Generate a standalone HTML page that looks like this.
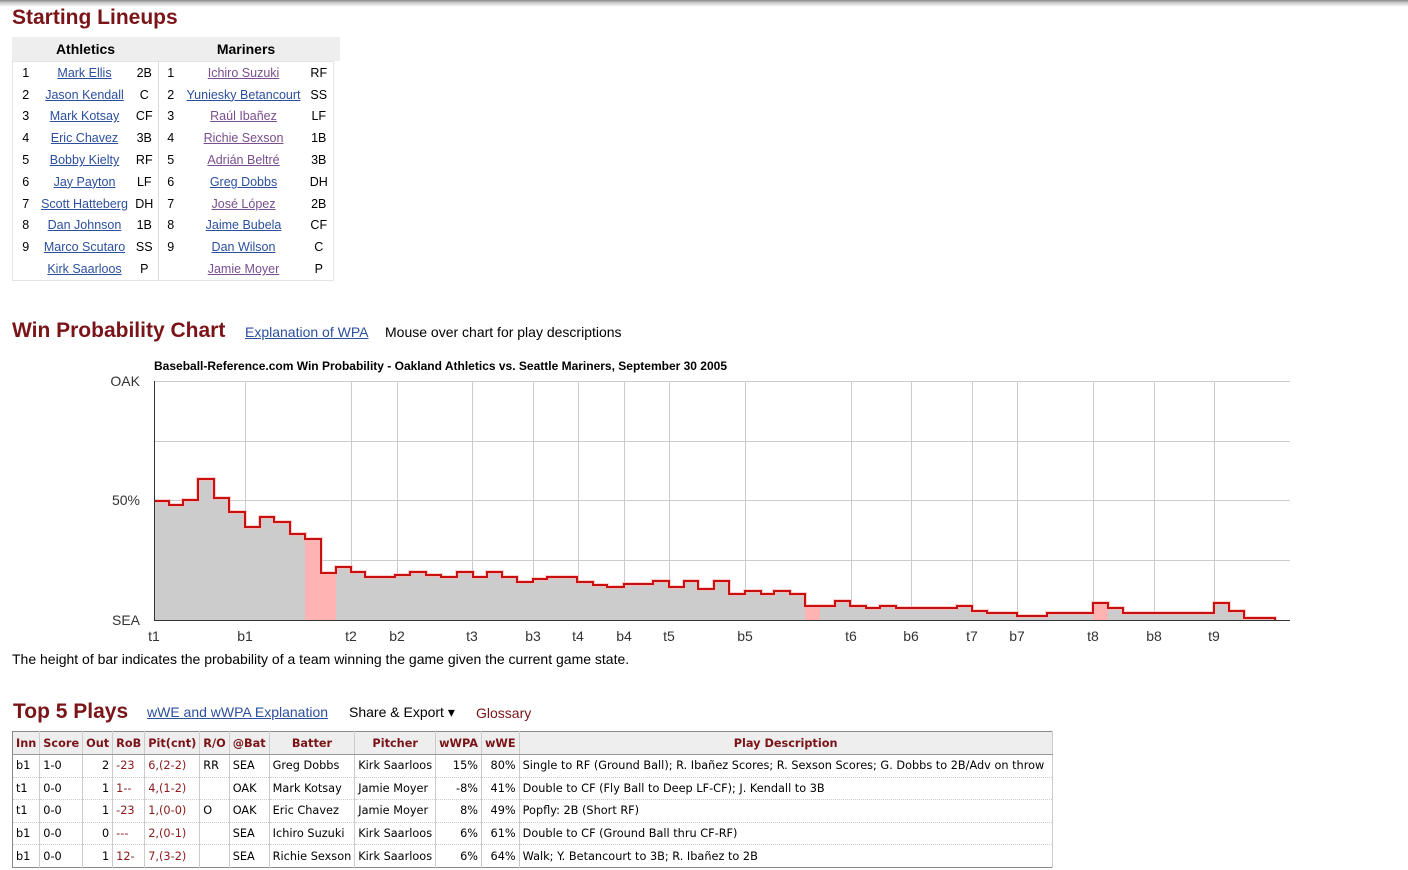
<!DOCTYPE html>
<html><head><meta charset="utf-8"><style>
body{margin:0;width:1408px;height:870px;overflow:hidden;background:#fff;font-family:"Liberation Sans",Arial,sans-serif;color:#000;position:relative}
.topbar{position:absolute;left:0;top:0;width:1408px;height:7px;background:linear-gradient(#888,#ccc 40%,#fff)}
h2{position:absolute;margin:0;color:#7a1418;font-size:21px;font-weight:bold}
a{color:#2c4f9e;text-decoration:underline}
a.v{color:#7a4e8e}
table{border-collapse:collapse;position:absolute}
#lu{left:12px;top:37px;font-size:12.5px;table-layout:fixed;width:321px}
#lu th{background:#eee;height:24px;font-size:14px;padding:0}
#lu td{height:21.8px;padding:0;text-align:center;white-space:nowrap;overflow:visible}
#lu td.sep{border-left:1px solid #ddd}
#lu tbody{border:1px solid #e4e4e4}
#tp{left:12px;top:731px;font-family:"DejaVu Sans",sans-serif;font-size:11.3px;border:1px solid #888}
#tp th{background:#eee;color:#7a1418;font-size:11.3px;height:22px;padding:0 3px;border-right:1px solid #ccc;border-bottom:1px solid #999}
#tp td{height:21.6px;padding:0 3px;border-right:1px solid #ccc;border-bottom:1px dotted #ccc;white-space:nowrap}
.r{color:#8b1a1a}
.ra{text-align:right}
</style></head><body>
<div class="topbar"></div>
<h2 style="left:12px;top:6px">Starting Lineups</h2>
<div style="position:absolute;left:12px;top:37px;width:328px;height:24px;background:#eee"></div>
<table id="lu">
<colgroup><col style="width:26px"><col style="width:92px"><col style="width:28px"><col style="width:24px"><col style="width:122px"><col style="width:29px"></colgroup>
<thead><tr><th colspan="3">Athletics</th><th colspan="3">Mariners</th></tr></thead>
<tbody>
<tr><td>1</td><td><a>Mark Ellis</a></td><td>2B</td><td class="sep">1</td><td><a class="v">Ichiro Suzuki</a></td><td>RF</td></tr>
<tr><td>2</td><td><a>Jason Kendall</a></td><td>C</td><td class="sep">2</td><td><a>Yuniesky Betancourt</a></td><td>SS</td></tr>
<tr><td>3</td><td><a>Mark Kotsay</a></td><td>CF</td><td class="sep">3</td><td><a class="v">Raúl Ibañez</a></td><td>LF</td></tr>
<tr><td>4</td><td><a>Eric Chavez</a></td><td>3B</td><td class="sep">4</td><td><a class="v">Richie Sexson</a></td><td>1B</td></tr>
<tr><td>5</td><td><a>Bobby Kielty</a></td><td>RF</td><td class="sep">5</td><td><a class="v">Adrián Beltré</a></td><td>3B</td></tr>
<tr><td>6</td><td><a>Jay Payton</a></td><td>LF</td><td class="sep">6</td><td><a>Greg Dobbs</a></td><td>DH</td></tr>
<tr><td>7</td><td><a>Scott Hatteberg</a></td><td>DH</td><td class="sep">7</td><td><a class="v">José López</a></td><td>2B</td></tr>
<tr><td>8</td><td><a>Dan Johnson</a></td><td>1B</td><td class="sep">8</td><td><a>Jaime Bubela</a></td><td>CF</td></tr>
<tr><td>9</td><td><a>Marco Scutaro</a></td><td>SS</td><td class="sep">9</td><td><a>Dan Wilson</a></td><td>C</td></tr>
<tr><td></td><td><a>Kirk Saarloos</a></td><td>P</td><td class="sep"></td><td><a class="v">Jamie Moyer</a></td><td>P</td></tr>
</tbody></table>

<h2 style="left:12px;top:319px">Win Probability Chart</h2>
<div style="position:absolute;left:245px;top:324px;font-size:14px"><a>Explanation of WPA</a></div>
<div style="position:absolute;left:385px;top:324px;font-size:14px">Mouse over chart for play descriptions</div>

<svg style="position:absolute;left:0;top:350px" width="1408" height="320" viewBox="0 350 1408 320">
<text x="154" y="370" font-family="Liberation Sans" font-weight="bold" font-size="12" textLength="573" lengthAdjust="spacingAndGlyphs">Baseball-Reference.com Win Probability - Oakland Athletics vs. Seattle Mariners, September 30 2005</text>
<g stroke="#ccc" stroke-width="1">
<line x1="154" y1="381.5" x2="1290" y2="381.5"/><line x1="154" y1="441.5" x2="1290" y2="441.5"/><line x1="154" y1="500.5" x2="1290" y2="500.5"/><line x1="154" y1="560.5" x2="1290" y2="560.5"/>
<line x1="245.5" y1="381" x2="245.5" y2="620"/><line x1="351.5" y1="381" x2="351.5" y2="620"/><line x1="397.5" y1="381" x2="397.5" y2="620"/><line x1="472.5" y1="381" x2="472.5" y2="620"/><line x1="533.5" y1="381" x2="533.5" y2="620"/><line x1="578.5" y1="381" x2="578.5" y2="620"/><line x1="624.5" y1="381" x2="624.5" y2="620"/><line x1="669.5" y1="381" x2="669.5" y2="620"/><line x1="745.5" y1="381" x2="745.5" y2="620"/><line x1="851.5" y1="381" x2="851.5" y2="620"/><line x1="911.5" y1="381" x2="911.5" y2="620"/><line x1="972.5" y1="381" x2="972.5" y2="620"/><line x1="1017.5" y1="381" x2="1017.5" y2="620"/><line x1="1093.5" y1="381" x2="1093.5" y2="620"/><line x1="1154.5" y1="381" x2="1154.5" y2="620"/><line x1="1214.5" y1="381" x2="1214.5" y2="620"/>
</g>
<path fill="#ccc" d="M154,501 H169 V505 H183 V500 H198 V479 H214 V498 H229 V512 H245 V527 H260 V517 H274 V522 H290 V534 H305 V539 H321 V573 H336 V567 H351 V572 H365 V577 H395 V575 H410 V572 H426 V575 H441 V577 H457 V572 H473 V577 H487 V572 H502 V577 H517 V582 H533 V579 H547 V577 H577 V582 H593 V585 H607 V587 H624 V584 H653 V581 H669 V587 H684 V581 H698 V589 H714 V581 H729 V594 H745 V591 H761 V594 H774 V591 H790 V594 H805 V606 H835 V601 H850 V606 H866 V608 H880 V606 H896 V608 H957 V606 H972 V611 H987 V613 H1017 V616 H1047 V613 H1093 V603 H1108 V608 H1123 V613 H1214 V603 H1229 V611 H1244 V618 H1275 V620 H1290 V620 H154 Z"/>
<g fill="#ffb3b3"><rect x="305" y="539" width="16" height="81"/><rect x="321" y="573" width="15" height="47"/><rect x="805" y="606" width="15" height="14"/><rect x="1093" y="603" width="15" height="17"/></g>
<path fill="none" stroke="#ffb0b0" stroke-width="4" opacity="0.6" d="M154,501 H169 V505 H183 V500 H198 V479 H214 V498 H229 V512 H245 V527 H260 V517 H274 V522 H290 V534 H305 V539 H321 V573 H336 V567 H351 V572 H365 V577 H395 V575 H410 V572 H426 V575 H441 V577 H457 V572 H473 V577 H487 V572 H502 V577 H517 V582 H533 V579 H547 V577 H577 V582 H593 V585 H607 V587 H624 V584 H653 V581 H669 V587 H684 V581 H698 V589 H714 V581 H729 V594 H745 V591 H761 V594 H774 V591 H790 V594 H805 V606 H835 V601 H850 V606 H866 V608 H880 V606 H896 V608 H957 V606 H972 V611 H987 V613 H1017 V616 H1047 V613 H1093 V603 H1108 V608 H1123 V613 H1214 V603 H1229 V611 H1244 V618 H1275 V620"/>
<path fill="none" stroke="#c81010" stroke-width="2" d="M154,501 H169 V505 H183 V500 H198 V479 H214 V498 H229 V512 H245 V527 H260 V517 H274 V522 H290 V534 H305 V539 H321 V573 H336 V567 H351 V572 H365 V577 H395 V575 H410 V572 H426 V575 H441 V577 H457 V572 H473 V577 H487 V572 H502 V577 H517 V582 H533 V579 H547 V577 H577 V582 H593 V585 H607 V587 H624 V584 H653 V581 H669 V587 H684 V581 H698 V589 H714 V581 H729 V594 H745 V591 H761 V594 H774 V591 H790 V594 H805 V606 H835 V601 H850 V606 H866 V608 H880 V606 H896 V608 H957 V606 H972 V611 H987 V613 H1017 V616 H1047 V613 H1093 V603 H1108 V608 H1123 V613 H1214 V603 H1229 V611 H1244 V618 H1275 V620"/>
<line x1="154.5" y1="381" x2="154.5" y2="621" stroke="#333"/>
<line x1="154" y1="620.5" x2="1290" y2="620.5" stroke="#333"/>
<g font-family="Liberation Sans" font-size="14" fill="#333" text-anchor="end">
<text x="140" y="386">OAK</text><text x="140" y="505">50%</text><text x="140" y="625">SEA</text></g>
<g font-family="Liberation Sans" font-size="14" fill="#333" text-anchor="middle">
<text x="154" y="641">t1</text><text x="245" y="641">b1</text><text x="351" y="641">t2</text><text x="397" y="641">b2</text><text x="472" y="641">t3</text><text x="533" y="641">b3</text><text x="578" y="641">t4</text><text x="624" y="641">b4</text><text x="669" y="641">t5</text><text x="745" y="641">b5</text><text x="851" y="641">t6</text><text x="911" y="641">b6</text><text x="972" y="641">t7</text><text x="1017" y="641">b7</text><text x="1093" y="641">t8</text><text x="1154" y="641">b8</text><text x="1214" y="641">t9</text></g>
<text x="12" y="664" font-family="Liberation Sans" font-size="14">The height of bar indicates the probability of a team winning the game given the current game state.</text>
</svg>

<h2 style="left:13px;top:700px">Top 5 Plays</h2>
<div style="position:absolute;left:147px;top:704px;font-size:14px"><a>wWE and wWPA Explanation</a></div>
<div style="position:absolute;left:349px;top:704px;font-size:14px">Share &amp; Export ▾</div>
<div style="position:absolute;left:476px;top:705px;font-size:14px;color:#7a1418">Glossary</div>
<table id="tp">
<tr><th>Inn</th><th>Score</th><th>Out</th><th>RoB</th><th>Pit(cnt)</th><th>R/O</th><th>@Bat</th><th style="width:78px">Batter</th><th>Pitcher</th><th>wWPA</th><th>wWE</th><th style="width:526px">Play Description</th></tr>
<tr><td>b1</td><td>1-0</td><td class="ra">2</td><td class="r">-23</td><td class="r">6,(2-2)</td><td>RR</td><td>SEA</td><td>Greg Dobbs</td><td>Kirk Saarloos</td><td class="ra">15%</td><td class="ra">80%</td><td>Single to RF (Ground Ball); R. Ibañez Scores; R. Sexson Scores; G. Dobbs to 2B/Adv on throw</td></tr>
<tr><td>t1</td><td>0-0</td><td class="ra">1</td><td class="r">1--</td><td class="r">4,(1-2)</td><td></td><td>OAK</td><td>Mark Kotsay</td><td>Jamie Moyer</td><td class="ra">-8%</td><td class="ra">41%</td><td>Double to CF (Fly Ball to Deep LF-CF); J. Kendall to 3B</td></tr>
<tr><td>t1</td><td>0-0</td><td class="ra">1</td><td class="r">-23</td><td class="r">1,(0-0)</td><td>O</td><td>OAK</td><td>Eric Chavez</td><td>Jamie Moyer</td><td class="ra">8%</td><td class="ra">49%</td><td>Popfly: 2B (Short RF)</td></tr>
<tr><td>b1</td><td>0-0</td><td class="ra">0</td><td class="r">---</td><td class="r">2,(0-1)</td><td></td><td>SEA</td><td>Ichiro Suzuki</td><td>Kirk Saarloos</td><td class="ra">6%</td><td class="ra">61%</td><td>Double to CF (Ground Ball thru CF-RF)</td></tr>
<tr><td>b1</td><td>0-0</td><td class="ra">1</td><td class="r">12-</td><td class="r">7,(3-2)</td><td></td><td>SEA</td><td>Richie Sexson</td><td>Kirk Saarloos</td><td class="ra">6%</td><td class="ra">64%</td><td>Walk; Y. Betancourt to 3B; R. Ibañez to 2B</td></tr>
</table>
</body></html>
